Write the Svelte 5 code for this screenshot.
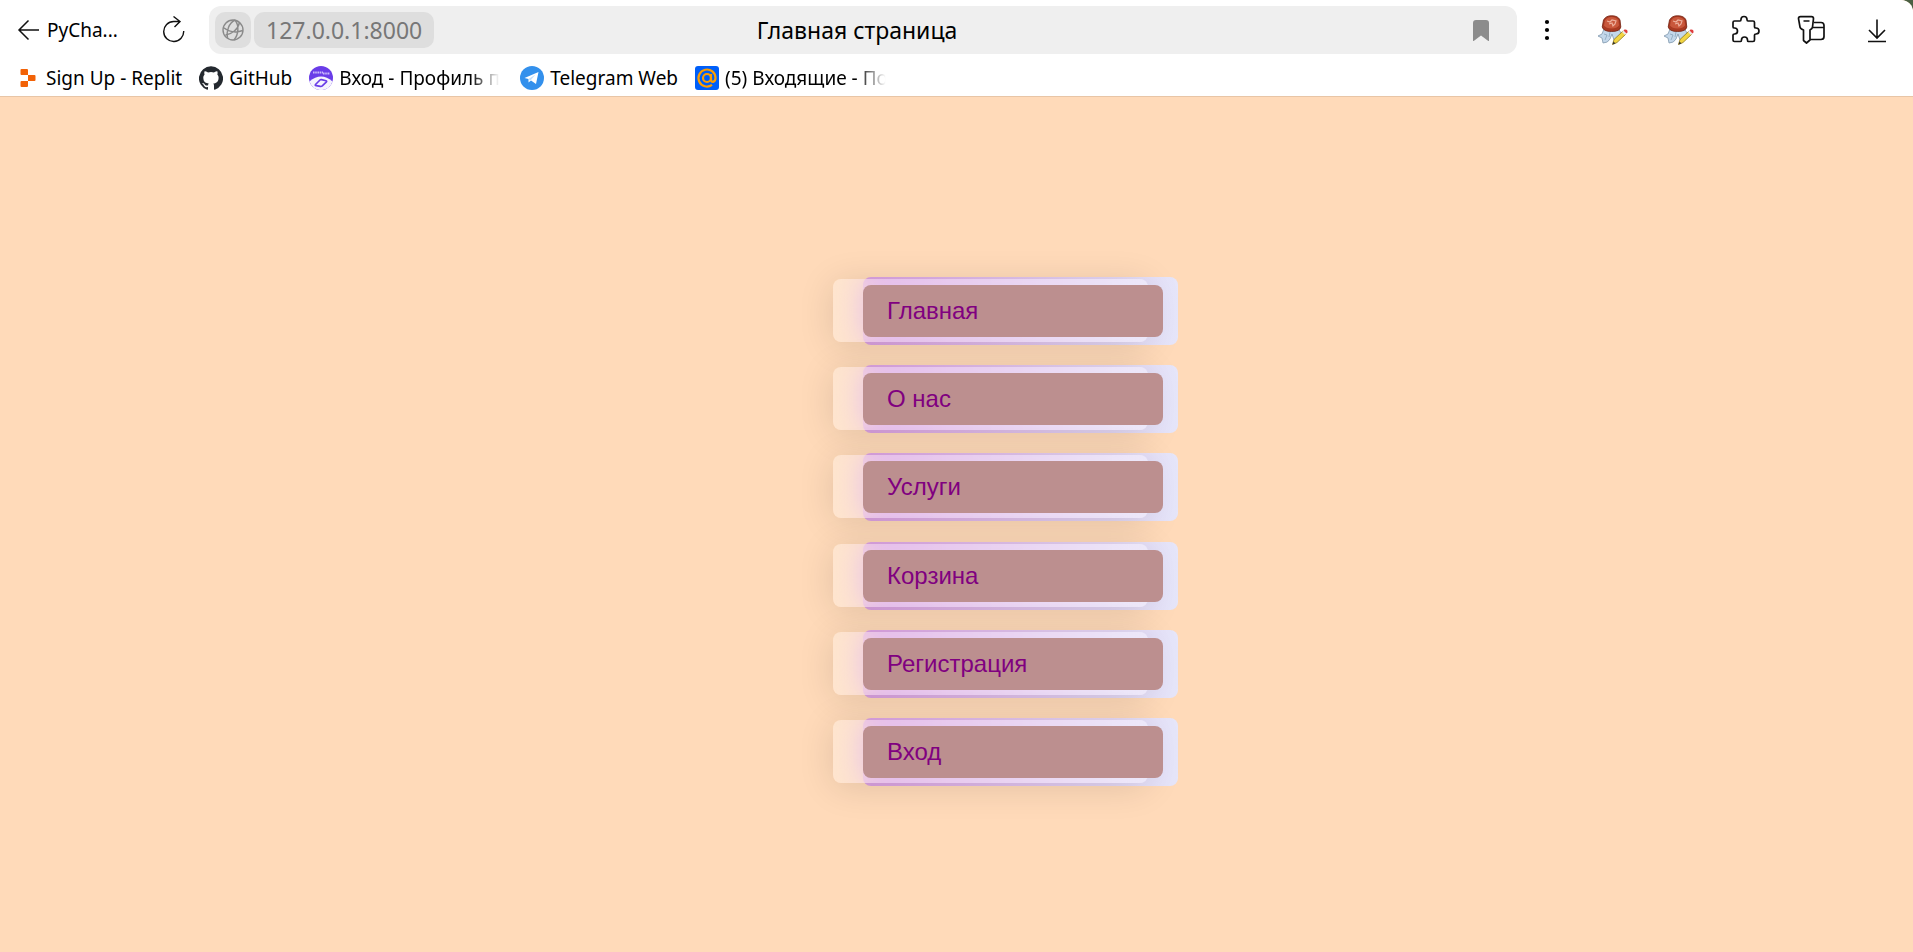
<script>
  const items = ['Главная', 'О нас', 'Услуги', 'Корзина', 'Регистрация', 'Вход'];
</script>

<div class="window">
  <header>
    <div class="toolbar">
      <button class="back" type="button">
        <svg width="24" height="24" viewBox="0 0 24 24" fill="none" stroke="#111" stroke-width="1.5"><path d="M22 12H2M11.500 2.500 2 12l9.500 9.500" /></svg>
        <span>PyCha...</span>
      </button>
      <button class="reload" type="button" aria-label="Обновить">
        <svg width="26" height="28" viewBox="0 0 26 28" fill="none" stroke="#111" stroke-width="1.4"><path d="M22.700 15A10 10 0 1 1 12.700 5.500H19M12.500 .5 19 5.500l-5.500 5.500" /></svg>
      </button>
      <div class="address">
        <div class="site">
          <button class="globe" type="button" aria-label="Сведения о сайте">
            <svg width="24" height="24" viewBox="0 0 24 24" fill="none" stroke="#8a8a8a" stroke-width="1.4"><circle cx="12" cy="12" r="10" /><path d="M14 2C8 5 5 13 6.500 20.300M14 2c4 5 4 14-1 20M2.300 9.500c6 4.500 13 5.500 19.500 3M4.500 17C11 16 17 11.500 18.500 4.500" /></svg>
          </button>
          <button class="host" type="button">127.0.0.1:8000</button>
        </div>
        <span class="title">Главная страница</span>
        <button class="mark" type="button" aria-label="Закладка">
          <svg width="16" height="21" viewBox="0 0 16 21"><path fill="#8c8c8c" d="M3 0h10a3 3 0 0 1 3 3v17.500q0 1-1 .2L8 15.500 1 20.700q-1 .8-1-.2V3a3 3 0 0 1 3-3z" /></svg>
        </button>
      </div>
      <div class="tools">
        <button type="button" aria-label="Меню">
          <svg width="30" height="30" viewBox="0 0 30 30"><circle cx="15" cy="7" r="2.1" /><circle cx="15" cy="15" r="2.1" /><circle cx="15" cy="23" r="2.1" /></svg>
        </button>
        {#each [1, 2] as n}
          <button type="button" aria-label="Подпись {n}">
            <svg width="30" height="30" viewBox="0 0 30 30">
              <path d="M6 14 4 19l-4 2 4 2 1 5q5 0 7-4l2-5 2 6 5-1 2-6-3-5z" fill="#c3d7ea" stroke="#8299ad" stroke-width=".8" />
              <path d="m6 19 3 1-2 5M12 17l-1 5" fill="none" stroke="#8aa4bb" stroke-width=".8" />
              <path d="M5.500 5Q8 .7 13.500 .7 20 .7 22 5l.8 7q-.8 4.500-9.300 4.500-8 0-9.300-4.500z" fill="#a93a22" stroke="#74210f" stroke-width=".8" />
              <path d="M7 5.500Q9 2 13.500 2q5 0 7 3.500l.5 5q-2 3-7.500 3T6 10.500z" fill="#c9583c" />
              <path d="m9 6 3 1 2-2 4 1-1 3-2 2-1-3-3 1" fill="none" stroke="#eeb19d" stroke-width="1.2" />
              <path d="m14.500 29.500 1.500-5 9-8.500 3 3-9 8.500z" fill="#f2d541" stroke="#8d771c" stroke-width=".8" />
              <path d="m14.500 29.500 1-3 2 2z" fill="#333" />
              <path d="m24 17 1.500-1.500 3 3L27 20z" fill="#e9e9e9" />
              <path d="m25.500 15.500 1-1q3.500-.5 3 3l-1 1z" fill="#df3d3d" />
            </svg>
          </button>
        {/each}
        <button type="button" aria-label="Расширения">
          <svg width="30" height="30" viewBox="0 0 30 30" fill="none" stroke="#111" stroke-width="1.7" stroke-linejoin="round"><path d="M4.500 6H10q1 0 1-1.500a3 3 0 0 1 6 0Q17 6 18 6h5q1.500 0 1.500 1.500V12q0 1 1.500 1a3 3 0 0 1 0 6q-1.500 0-1.500 1v5q0 1.500-1.500 1.500h-5q-.5 0-.5-1.500a3 3 0 0 0-6 0q0 1.500-1 1.500h-6Q3 26.500 3 25v-5q0-1 1.500-1a3 3 0 0 0 0-6Q3 13 3 12V7.500Q3 6 4.500 6z" /></svg>
        </button>
        <button type="button" aria-label="Пароли">
          <svg width="30" height="30" viewBox="0 0 30 30" fill="none" stroke="#111" stroke-width="1.7" stroke-linejoin="round"><path d="M4.500 1.700h11q2 0 2 2l-1 8.300q0 1.500-2.500 3v10L10.500 28l-3-2.500V15Q4 13.500 4 12L2.500 3.700q0-2 2-2zM7.500 6h6M18 7.500h7q3 0 3 3v11q0 3-3 3H14M17 12.500h11" /></svg>
        </button>
        <button type="button" aria-label="Загрузки">
          <svg width="30" height="30" viewBox="0 0 30 30" fill="none" stroke="#111" stroke-width="1.6"><path d="M15 4.500v18.500M7 15l8 8 8-8M6 26.500h18" /></svg>
        </button>
      </div>
    </div>
    <nav class="bookmarks" aria-label="Закладки">
      <a href="#replit">
        <svg width="24" height="24" viewBox="0 0 24 24" fill="#f26207"><path d="M5.500 3h5.500q1 0 1 1v5H5.500q-1 0-1-1V4q0-1 1-1zM12 9h6.500q1 0 1 1v4q0 1-1 1H12zM5.500 15H12v5q0 1-1 1H5.500q-1 0-1-1v-4q0-1 1-1z" /></svg>
        <span>Sign Up - Replit</span>
      </a>
      <a href="#github">
        <svg width="24" height="24" viewBox="0 0 24 24" fill="#24292f"><path d="M12 .3a12 12 0 0 0-3.800 23.400c.6.100.8-.3.800-.6v-2c-3.300.7-4-1.600-4-1.600-.6-1.400-1.400-1.800-1.400-1.800-1-.7.100-.7.100-.7 1.200 0 1.900 1.200 1.900 1.200 1 1.800 2.800 1.300 3.500 1 0-.8.400-1.300.7-1.600-2.700-.3-5.500-1.300-5.500-6 0-1.200.5-2.300 1.300-3.100-.2-.4-.6-1.600 0-3.200 0 0 1-.3 3.400 1.200a11.500 11.500 0 0 1 6 0c2.300-1.500 3.300-1.200 3.300-1.200.6 1.600.2 2.800 0 3.200.9.800 1.300 1.900 1.300 3.200 0 4.600-2.800 5.600-5.500 5.900.5.400.9 1 .9 2.200v3.300c0 .3.100.7.800.6A12 12 0 0 0 12 .3" /></svg>
        <span>GitHub</span>
      </a>
      <a href="#profile">
        <svg width="24" height="24" viewBox="0 0 24 24"><circle cx="12" cy="12" r="12" fill="#6a3de8" /><path d="M.5 15.500Q12 5.500 23.500 15.500A12 12 0 0 1 .5 15.500z" fill="#f6f4fd" /><path d="M4 6.500h10M14 7.500h7" stroke="#c9b8fb" stroke-width="2" stroke-dasharray="1.6 .6" /><path d="M6.500 18.500 11 14q.5-.5 1.500-.3l4.500 1q1.200.5.200 1.500L13 20q-.7.700-1.700.4l-4-.7q-1.600-.4-.8-1.200z" fill="none" stroke="#6a3de8" stroke-width="1.700" /></svg>
        <span class="fade">Вход - Профиль по</span>
      </a>
      <a href="#telegram">
        <svg width="24" height="24" viewBox="0 0 24 24"><circle cx="12" cy="12" r="12" fill="#3390ec" /><path d="M4.500 12 18.500 6l-2.500 12-5-3.500-2.500 2V13z" fill="#fff" /><path d="m8.500 13 7-4.500-5 6z" fill="#c4dffa" /></svg>
        <span>Telegram Web</span>
      </a>
      <a href="#mail">
        <svg width="24" height="24" viewBox="0 0 24 24" fill="none" stroke="#ff9e00" stroke-width="2.2"><rect width="24" height="24" rx="3" fill="#005ff9" stroke="none" /><circle cx="12" cy="12" r="4" /><path d="M16 8v5.500q0 2.500 2 2.500 2.500-1 2.500-4A8.500 8.500 0 1 0 17 18.900" /></svg>
        <span class="fade">(5) Входящие - По</span>
      </a>
    </nav>
  </header>

  <main>
    <ul>
      {#each items as item}
        <li><a href="#page">{item}</a></li>
      {/each}
    </ul>
  </main>
</div>

<style>
  :global(body) { background: #4b6043; }
  .window {
    min-height: 100vh;
    display: flex;
    flex-direction: column;
    border-radius: 0 12px 0 0;
    overflow: hidden;
    background: #ffdab9;
  }
  header {
    background: #fff;
    border-bottom: 1px solid #e8c5a6;
    font-family: "Noto Sans", sans-serif;
    color: #000;
  }
  button {
    border: 0;
    padding: 0;
    background: none;
    font: inherit;
    display: flex;
    align-items: center;
    justify-content: center;
  }
  svg { flex: none; display: block; }
  .toolbar { display: flex; align-items: center; height: 60px; padding: 0 21px 0 17px; }
  .back { width: 104px; gap: 6px; font-size: 19px; justify-content: flex-start; white-space: nowrap; }
  .reload { width: 26px; margin: 0 22px 0 40px; }
  .address {
    flex: 1;
    display: grid;
    grid-template-columns: 1fr auto 1fr;
    align-items: center;
    height: 48px;
    padding: 0 28px 0 6px;
    box-sizing: border-box;
    border-radius: 12px;
    background: #efefef;
  }
  .site { display: flex; gap: 3px; }
  .globe, .host { height: 36px; border-radius: 10px; background: #dedede; }
  .globe { width: 36px; }
  .host { padding: 0 12px; font-size: 23px; color: #777; }
  .title { font-size: 23px; padding-left: 10px; }
  .mark { justify-self: end; }
  .tools { display: flex; gap: 36px; margin-left: 15px; }
  .bookmarks { display: flex; align-items: center; gap: 17px; height: 36px; padding: 0 16px; }
  .bookmarks a { display: flex; align-items: center; gap: 6px; color: #000; text-decoration: none; font-size: 19px; white-space: nowrap; }
  .fade {
    width: 164px;
    overflow: hidden;
    -webkit-mask-image: linear-gradient(90deg, #000 80%, transparent 98%);
    mask-image: linear-gradient(90deg, #000 80%, transparent 98%);
  }
  main { flex: 1; display: flex; align-items: center; justify-content: center; padding: 14px 0 0 128px; }
  ul {
    list-style: none;
    margin: 0;
    padding: 0;
    min-height: 510px;
    display: flex;
    flex-direction: column;
    justify-content: space-between;
  }
  li {
    position: relative;
    width: 315px;
    height: 68px;
    border-radius: 8px;
    background: linear-gradient(90deg, #dba0e0, #e6e6fa);
    display: flex;
    align-items: center;
  }
  li::before {
    content: "";
    position: absolute;
    inset: 2px 30px 3px -30px;
    border-radius: 8px;
    background: rgba(255, 255, 255, 0.3);
    backdrop-filter: blur(15px);
    box-shadow: 0 4px 36px rgba(0, 0, 0, 0.12);
  }
  li a {
    position: relative;
    width: 300px;
    box-sizing: border-box;
    padding: 0 24px;
    border-radius: 8px;
    background: #bc8f8f;
    color: #800080;
    font: 24px/52px "Liberation Sans", Arial, sans-serif;
    text-decoration: none;
  }
</style>
